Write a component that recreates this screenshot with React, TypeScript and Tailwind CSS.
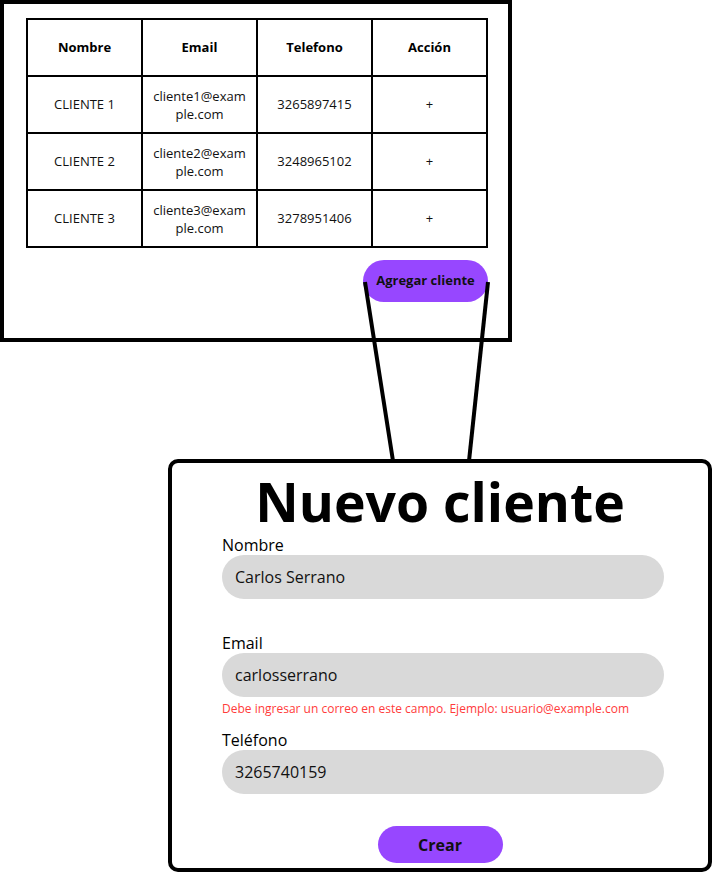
import React from "react";

const clientes = [
  { nombre: "CLIENTE 1", email: "cliente1@example.com", telefono: "3265897415" },
  { nombre: "CLIENTE 2", email: "cliente2@example.com", telefono: "3248965102" },
  { nombre: "CLIENTE 3", email: "cliente3@example.com", telefono: "3278951406" },
];

function Campo({ label, value }: { label: string; value: string }) {
  return (
    <div className="flex flex-col">
      <label className="text-[16px] leading-[20px] text-black">{label}</label>
      <div className="h-[44px] rounded-full bg-[#d9d9d9] px-[13px] flex items-center text-[16px] text-[#111]">
        {value}
      </div>
    </div>
  );
}

export default function App() {
  const cell = "h-[57px] border-r-2 border-b-2 border-black flex items-center justify-center text-center px-2";

  return (
    <div
      className="relative w-[712px] h-[873px] bg-white text-black overflow-hidden"
      style={{ fontFamily: '"Open Sans", "Noto Sans", sans-serif' }}
    >
      {/* Tabla de clientes */}
      <div className="w-[512px] h-[342px] border-4 border-black pl-[22px] pt-[14px]">
        <div className="w-[462px] grid grid-cols-4 border-l-2 border-t-2 border-black">
          {["Nombre", "Email", "Telefono", "Acción"].map((h) => (
            <div key={h} className={`${cell} font-bold text-[13px]`}>
              {h}
            </div>
          ))}
          {clientes.map((c) => (
            <React.Fragment key={c.nombre}>
              <div className={`${cell} text-[13px] text-[#111]`}>{c.nombre}</div>
              <div className={`${cell} text-[13px] leading-[18px] text-[#111] break-all`}>{c.email}</div>
              <div className={`${cell} text-[13px] text-[#111]`}>{c.telefono}</div>
              <div className={`${cell} text-[13px] text-[#111]`}>+</div>
            </React.Fragment>
          ))}
        </div>
        <div className="w-[462px] flex justify-end mt-[12px]">
          <button className="w-[125px] h-[42px] rounded-full bg-[#9747ff] text-[13px] font-bold text-[#111]">
            Agregar cliente
          </button>
        </div>
      </div>

      {/* Formulario */}
      <div className="ml-[168px] mt-[117px] w-[544px] h-[413px] border-4 border-black rounded-[10px] pt-[15px]">
        <h1 className="text-center text-[53.5px] leading-[48px] font-bold">Nuevo cliente</h1>
        <div className="ml-[50px] w-[442px] mt-[9px] flex flex-col">
          <Campo label="Nombre" value="Carlos Serrano" />
          <div className="mt-[34px]">
            <Campo label="Email" value="carlosserrano" />
          </div>
          <p className="mt-[4px] text-[12px] leading-[16px] text-[#ff3b3b]">
            Debe ingresar un correo en este campo. Ejemplo: usuario@example.com
          </p>
          <div className="mt-[13px]">
            <Campo label="Teléfono" value="3265740159" />
          </div>
        </div>
        <div className="flex justify-center mt-[32px]">
          <button className="w-[125px] h-[37px] rounded-full bg-[#9747ff] text-[16px] font-bold text-[#111]">
            Crear
          </button>
        </div>
      </div>

      {/* Líneas de conexión */}
      <svg className="absolute left-0 top-0 pointer-events-none" width="712" height="873">
        <line x1="365" y1="282" x2="393" y2="461" stroke="black" strokeWidth="4" />
        <line x1="488" y1="282" x2="469" y2="461" stroke="black" strokeWidth="4" />
      </svg>
    </div>
  );
}
